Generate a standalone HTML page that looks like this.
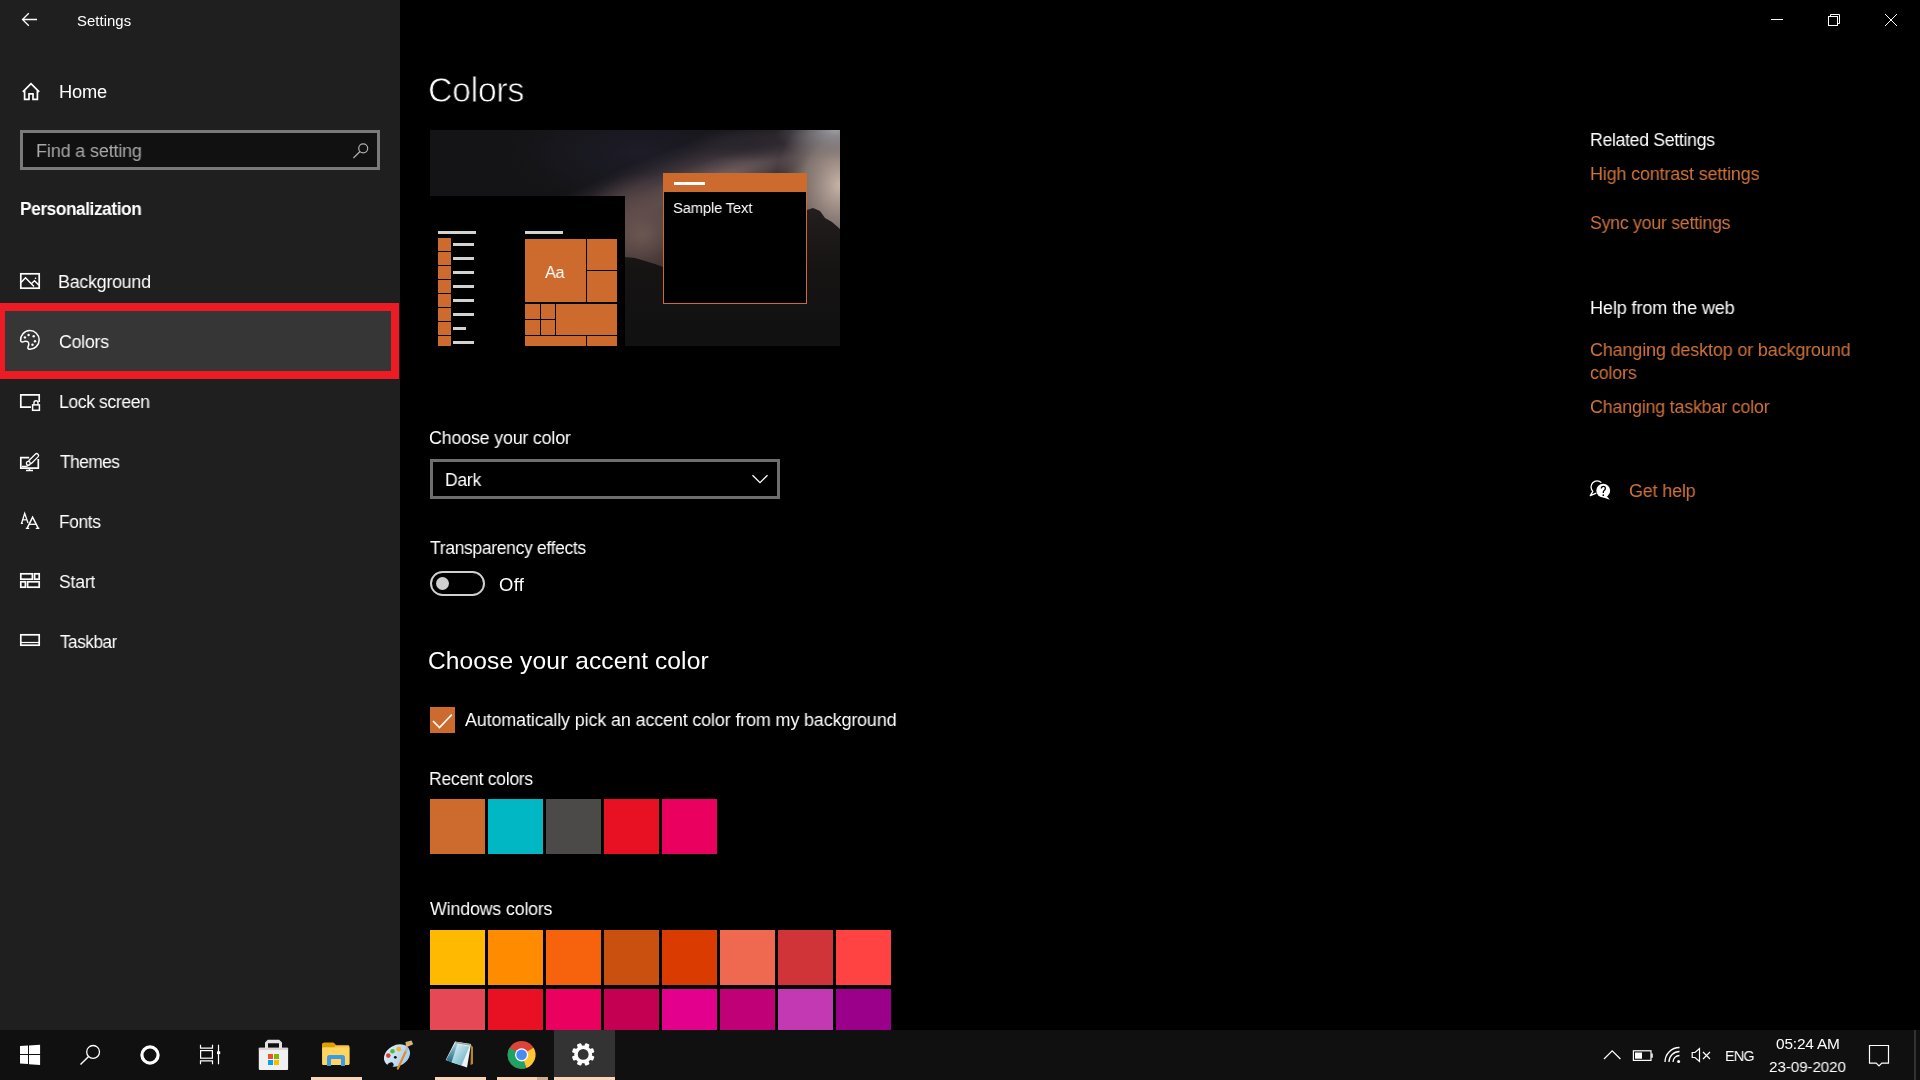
<!DOCTYPE html>
<html><head><meta charset="utf-8"><title>Settings - Colors</title>
<style>
*{margin:0;padding:0;box-sizing:border-box}
html,body{width:1920px;height:1080px;overflow:hidden;background:#000;font-family:"Liberation Sans",sans-serif;color:#fff}
.a{position:absolute}
.t{position:absolute;white-space:nowrap;line-height:1;will-change:transform}
svg{position:absolute;overflow:visible}
</style></head><body>

<div class="a" style="left:0;top:0;width:400px;height:1030px;background:#1f1f1f"></div>
<div class="a" style="left:0;top:303px;width:399px;height:76px;background:#ed1c24"></div>
<div class="a" style="left:5px;top:311px;width:386px;height:60px;background:#363636"></div>
<div class="a" style="left:20px;top:130px;width:360px;height:40px;border:3px solid #7a7a7a;background:#111"></div>
<div class="a" style="left:430px;top:459px;width:350px;height:40px;border:3px solid #6e6e6e;background:#000"></div>
<svg class="a" style="left:0;top:0" width="400" height="700" viewBox="0 0 400 700" fill="none" stroke="#fff" stroke-width="1.3">
<path d="M22.5 19.5H37M28.8 13.2L22.5 19.5L28.8 25.8"/>
<path d="M22.8 91.8L31 83.6L39.2 91.8M24.6 90V99.3H29V93.8H33V99.3H37.4V90" stroke-width="1.7"/>
<circle cx="363.2" cy="148.3" r="4.5" stroke-width="1.2" stroke="#b0b0b0"/><path d="M360 151.5L353.4 158" stroke-width="1.2" stroke="#b0b0b0"/>
<rect x="20.8" y="273.8" width="18.4" height="14.4" stroke-width="1.7"/><path d="M21 282.5L25.5 277.8L34 286.5M31.3 283.8L34.5 280.7L39 285.2" stroke-width="1.5"/><circle cx="35.5" cy="278.3" r="0.8" fill="#fff" stroke="none"/>
<path d="M29.5 349.2A9.3 9.3 0 1 0 20.6 340.6C20.9 342.3 22.6 342.3 24.5 341.4C26.8 340.6 29 342 28.8 344.4C28.6 346.2 27.4 347.2 28 348.4C28.3 349 28.9 349.2 29.5 349.2Z" stroke-width="1.5"/>
<circle cx="24.9" cy="337.4" r="1.2" fill="#fff" stroke="none"/>
<circle cx="28.6" cy="335" r="1.2" fill="#fff" stroke="none"/>
<circle cx="33.7" cy="336.3" r="1.2" fill="#fff" stroke="none"/>
<circle cx="35" cy="341.3" r="1.2" fill="#fff" stroke="none"/>
<circle cx="32.5" cy="344.8" r="1.2" fill="#fff" stroke="none"/>
<path d="M31 407.2H20.8V394.8H39.2V402" stroke-width="1.7"/><rect x="32.6" y="404.9" width="6.8" height="5.4" stroke-width="1.5"/><path d="M34 404.8V402.8A2 2 0 0 1 38 402.8V404.8" stroke-width="1.4"/>
<path d="M29.2 457.6H20.8V468.2H38.3V459" stroke-width="1.7"/><path d="M26 470.6H33M29.5 468.5V470.5" stroke-width="1.5"/>
<rect x="-1.9" y="-6.2" width="3.8" height="12.4" rx="1.9" transform="translate(33.6 458.6) rotate(45)" stroke-width="1.3" fill="#1f1f1f"/>
<circle cx="28.3" cy="463.2" r="1.9" stroke-width="1.3" fill="#1f1f1f"/><path d="M22 466.3H26.2C27.2 466.3 28.2 465.8 28.7 465" stroke-width="1.3"/>
<rect x="20.8" y="573.8" width="11.6" height="5.4" stroke-width="1.7"/><rect x="34.6" y="573.8" width="4.6" height="5.4" stroke-width="1.7"/><rect x="20.8" y="581.8" width="4.6" height="5.4" stroke-width="1.7"/><rect x="27.6" y="581.8" width="11.6" height="5.4" stroke-width="1.7"/>
<rect x="20.8" y="634.8" width="18.4" height="10.4" stroke-width="1.7"/><path d="M21 642.5H39" stroke-width="1.2"/>
</svg>
<svg class="a" style="left:0;top:0" width="60" height="560" fill="none" stroke="#fff" stroke-linejoin="miter"><path d="M21.6 523.3L24.7 513.3L28 523" stroke-width="1.3"/><path d="M22.8 519.8H26.6" stroke-width="1.2"/><path d="M20.8 523.4H23" stroke-width="1.1"/><path d="M27.2 528.2L32.6 517.2L38.2 528.2" stroke-width="1.5"/><path d="M29.2 524.3H36.2" stroke-width="1.3"/><path d="M25.8 528.4H29.2M35.8 528.4H39.4" stroke-width="1.2"/></svg>
<svg class="a" style="left:1760px;top:0" width="160" height="40" fill="none" stroke="#fff" stroke-width="1">
<path d="M11 19.5H23"/>
<rect x="68.5" y="16.5" width="9" height="9"/><path d="M70.5 16.5V14.5H79.5V23.5H77.5"/>
<path d="M125 14L137 26M137 14L125 26"/>
</svg>
<svg class="a" style="left:430px;top:130px;overflow:hidden" width="410" height="216" viewBox="0 0 410 216">
<defs>
<radialGradient id="g1"><stop offset="0" stop-color="#1d1c28" stop-opacity="1"/><stop offset="1" stop-color="#1d1c28" stop-opacity="0"/></radialGradient>
<radialGradient id="g2"><stop offset="0" stop-color="#5a4a4e" stop-opacity="1"/><stop offset="0.5" stop-color="#4a3e44" stop-opacity="0.8"/><stop offset="1" stop-color="#3a3038" stop-opacity="0"/></radialGradient>
<radialGradient id="g3"><stop offset="0" stop-color="#c8b4a8" stop-opacity="1"/><stop offset="0.55" stop-color="#a8968e" stop-opacity="0.7"/><stop offset="1" stop-color="#8a7c7c" stop-opacity="0"/></radialGradient>
<radialGradient id="g4"><stop offset="0" stop-color="#6e5852" stop-opacity="0.95"/><stop offset="0.6" stop-color="#5e4a48" stop-opacity="0.6"/><stop offset="1" stop-color="#4a3c3e" stop-opacity="0"/></radialGradient>
<radialGradient id="g5"><stop offset="0" stop-color="#29252d" stop-opacity="1"/><stop offset="1" stop-color="#29252d" stop-opacity="0"/></radialGradient>
<radialGradient id="g7"><stop offset="0" stop-color="#9c9ca2" stop-opacity="1"/><stop offset="1" stop-color="#6a6a72" stop-opacity="0"/></radialGradient>
<radialGradient id="g6"><stop offset="0" stop-color="#7a6a68" stop-opacity="0.9"/><stop offset="1" stop-color="#6a5a5a" stop-opacity="0"/></radialGradient>
<linearGradient id="m1" x1="0" y1="0" x2="0" y2="1"><stop offset="0" stop-color="#241e1e"/><stop offset="0.45" stop-color="#161313"/><stop offset="1" stop-color="#111"/></linearGradient>
<linearGradient id="m2" x1="0" y1="0" x2="0" y2="1"><stop offset="0" stop-color="#3a302e"/><stop offset="1" stop-color="#141212"/></linearGradient>
</defs>
<rect width="410" height="216" fill="#141416"/>
<ellipse cx="210" cy="22" rx="130" ry="55" fill="url(#g1)"/>
<ellipse cx="235" cy="72" rx="230" ry="48" transform="rotate(-22 235 72)" fill="url(#g2)"/>
<ellipse cx="290" cy="48" rx="95" ry="20" transform="rotate(-18 290 48)" fill="url(#g6)"/>
<ellipse cx="318" cy="14" rx="60" ry="18" fill="url(#g5)"/>
<ellipse cx="410" cy="55" rx="65" ry="80" fill="url(#g3)"/>
<ellipse cx="405" cy="0" rx="60" ry="30" fill="url(#g7)"/>
<ellipse cx="212" cy="105" rx="65" ry="62" fill="url(#g4)"/>
<path d="M195 127L205 128L215 131L225 134L233 137L250 145L300 160L340 140L377 80L383 78L390 81L395 88L402 92L410 99V216H195Z" fill="url(#m1)"/>
</svg>
<div class="a" style="left:430px;top:196px;width:195px;height:150px;background:#000"></div>
<div class="a" style="left:438px;top:231px;width:38px;height:3px;background:#d2d2d2"></div>
<div class="a" style="left:438px;top:238px;width:13px;height:13px;background:#cd6a2e"></div>
<div class="a" style="left:453px;top:243px;width:21px;height:3px;background:#d2d2d2"></div>
<div class="a" style="left:438px;top:252px;width:13px;height:13px;background:#cd6a2e"></div>
<div class="a" style="left:453px;top:257px;width:21px;height:3px;background:#d2d2d2"></div>
<div class="a" style="left:438px;top:266px;width:13px;height:13px;background:#cd6a2e"></div>
<div class="a" style="left:453px;top:271px;width:21px;height:3px;background:#d2d2d2"></div>
<div class="a" style="left:438px;top:280px;width:13px;height:13px;background:#cd6a2e"></div>
<div class="a" style="left:453px;top:285px;width:21px;height:3px;background:#d2d2d2"></div>
<div class="a" style="left:438px;top:294px;width:13px;height:13px;background:#cd6a2e"></div>
<div class="a" style="left:453px;top:299px;width:21px;height:3px;background:#d2d2d2"></div>
<div class="a" style="left:438px;top:308px;width:13px;height:13px;background:#cd6a2e"></div>
<div class="a" style="left:453px;top:313px;width:21px;height:3px;background:#d2d2d2"></div>
<div class="a" style="left:438px;top:322px;width:13px;height:13px;background:#cd6a2e"></div>
<div class="a" style="left:453px;top:327px;width:13px;height:3px;background:#d2d2d2"></div>
<div class="a" style="left:438px;top:336px;width:13px;height:10px;background:#cd6a2e"></div>
<div class="a" style="left:453px;top:341px;width:21px;height:3px;background:#d2d2d2"></div>
<div class="a" style="left:525px;top:231px;width:38px;height:3px;background:#d2d2d2"></div>
<div class="a" style="left:525px;top:239px;width:61px;height:63px;background:#cd6a2e"></div>
<div class="a" style="left:587px;top:239px;width:30px;height:31px;background:#cd6a2e"></div>
<div class="a" style="left:587px;top:271px;width:30px;height:31px;background:#cd6a2e"></div>
<div class="a" style="left:525px;top:304px;width:15px;height:15px;background:#cd6a2e"></div>
<div class="a" style="left:541px;top:304px;width:14px;height:15px;background:#cd6a2e"></div>
<div class="a" style="left:525px;top:320px;width:15px;height:15px;background:#cd6a2e"></div>
<div class="a" style="left:541px;top:320px;width:14px;height:15px;background:#cd6a2e"></div>
<div class="a" style="left:556px;top:304px;width:61px;height:31px;background:#cd6a2e"></div>
<div class="a" style="left:525px;top:336px;width:61px;height:10px;background:#cd6a2e"></div>
<div class="a" style="left:587px;top:336px;width:30px;height:10px;background:#cd6a2e"></div>
<div class="a" style="left:663px;top:173px;width:144px;height:131px;border:1px solid #cd6a2e;border-top:19px solid #cd6a2e;background:#000"></div>
<div class="a" style="left:674px;top:182px;width:31px;height:3px;background:#fff"></div>
<div class="a" style="left:430px;top:571px;width:55px;height:25px;border:2px solid #cfcfcf;border-radius:13px"></div>
<div class="a" style="left:436px;top:577px;width:13px;height:13px;border-radius:50%;background:#cfcfcf"></div>
<svg class="a" style="left:750px;top:470px" width="22" height="18" fill="none" stroke="#fff" stroke-width="1.3"><path d="M2.5 5.2L10 12.6L17.5 5.2"/></svg>
<div class="a" style="left:430px;top:707px;width:25px;height:26px;background:#cd6a2e"></div>
<svg class="a" style="left:430px;top:707px" width="25" height="25" fill="none" stroke="#fff" stroke-width="1.6"><path d="M3 14L9.5 20.5L21.8 7.6"/></svg>
<div class="a" style="left:430px;top:799px;width:55px;height:55px;background:#cd6a2e"></div>
<div class="a" style="left:488px;top:799px;width:55px;height:55px;background:#00b7c3"></div>
<div class="a" style="left:546px;top:799px;width:55px;height:55px;background:#4c4a48"></div>
<div class="a" style="left:604px;top:799px;width:55px;height:55px;background:#e81123"></div>
<div class="a" style="left:662px;top:799px;width:55px;height:55px;background:#ea005e"></div>
<div class="a" style="left:430px;top:930px;width:55px;height:55px;background:#ffb900"></div>
<div class="a" style="left:488px;top:930px;width:55px;height:55px;background:#ff8c00"></div>
<div class="a" style="left:546px;top:930px;width:55px;height:55px;background:#f7630c"></div>
<div class="a" style="left:604px;top:930px;width:55px;height:55px;background:#ca5010"></div>
<div class="a" style="left:662px;top:930px;width:55px;height:55px;background:#da3b01"></div>
<div class="a" style="left:720px;top:930px;width:55px;height:55px;background:#ef6950"></div>
<div class="a" style="left:778px;top:930px;width:55px;height:55px;background:#d13438"></div>
<div class="a" style="left:836px;top:930px;width:55px;height:55px;background:#ff4343"></div>
<div class="a" style="left:430px;top:989px;width:55px;height:55px;background:#e74856"></div>
<div class="a" style="left:488px;top:989px;width:55px;height:55px;background:#e81123"></div>
<div class="a" style="left:546px;top:989px;width:55px;height:55px;background:#ea005e"></div>
<div class="a" style="left:604px;top:989px;width:55px;height:55px;background:#c30052"></div>
<div class="a" style="left:662px;top:989px;width:55px;height:55px;background:#e3008c"></div>
<div class="a" style="left:720px;top:989px;width:55px;height:55px;background:#bf0077"></div>
<div class="a" style="left:778px;top:989px;width:55px;height:55px;background:#c239b3"></div>
<div class="a" style="left:836px;top:989px;width:55px;height:55px;background:#9a0089"></div>
<svg class="a" style="left:1588px;top:478px" width="24" height="24" fill="none" stroke="#fff" stroke-width="1.3" stroke-linejoin="round"><path d="M4.9 13.4A6.1 6.1 0 1 1 13.4 4.6"/><path d="M5 13.2L2.3 17.7L8.3 15.2"/><circle cx="15.2" cy="12.7" r="6.9" fill="#fff" stroke="none"/><path d="M18.3 17.5L21.8 21.7L14.8 19.3Z" fill="#fff" stroke="none"/><path d="M13.3 10.6Q13.3 8.4 15.4 8.4Q17.4 8.4 17.4 10.3Q17.4 11.5 16.2 12.4Q15.3 13.1 15.3 14.4V15" stroke="#000" stroke-width="1.3" stroke-linejoin="miter"/><circle cx="15.3" cy="17.2" r="0.85" fill="#000" stroke="none"/></svg>
<div class="a" style="left:0;top:1030px;width:1920px;height:50px;background:#101010"></div>
<div class="a" style="left:554px;top:1030px;width:61px;height:50px;background:#333"></div>
<div class="a" style="left:311px;top:1077px;width:51px;height:3px;background:#fcd3b5"></div>
<div class="a" style="left:435px;top:1077px;width:51px;height:3px;background:#fcd3b5"></div>
<div class="a" style="left:497px;top:1077px;width:40px;height:3px;background:#fcd3b5"></div>
<div class="a" style="left:537px;top:1077px;width:11px;height:3px;background:#d2ab93"></div>
<div class="a" style="left:554px;top:1077px;width:61px;height:3px;background:#fcd3b5"></div>
<svg class="a" style="left:0;top:1030px" width="1920" height="50" fill="none" stroke="#fff">
<path d="M20 16.1L28 15.55V24H20Z M29 15.45L40.1 14.7V24H29Z M20 25H28V34.1L20 33.6Z M29 25H40.1V35.1L29 34.3Z" fill="#fff" stroke="none"/>
</svg>
<svg class="a" style="left:0;top:1030px" width="700" height="50" viewBox="0 0 700 50">
<g fill="none" stroke="#fff">
<circle cx="93.1" cy="21.9" r="6.4" stroke-width="1.3"/><path d="M88.6 26.4L80.5 34.5" stroke-width="1.4"/>
<circle cx="150" cy="25" r="8.1" stroke-width="3.2"/>
<path d="M200.5 14.7V18.2H212.5V14.7M200.5 34.3V30.8H212.5V34.3" stroke-width="1.2"/>
<rect x="200.6" y="20.6" width="11.8" height="7.6" stroke-width="1.2"/>
<path d="M218.5 14.7V34.3" stroke-width="1.2"/>
</g>
<rect x="217" y="21.3" width="3.2" height="2.8" fill="#fff"/>
<!-- store -->
<path d="M265 18V12.5L267.8 9.7H279.2L282 12.5V18H279V13.2H268V18Z" fill="#e2e2e2"/>
<rect x="258.8" y="17.8" width="29.3" height="22.2" rx="1" fill="#f0f0f0"/>
<rect x="258.8" y="17.8" width="29.3" height="2.2" fill="#d6d6d6"/>
<rect x="268" y="24" width="5" height="5" fill="#f25022"/><rect x="274" y="24" width="5" height="5" fill="#7fba00"/>
<rect x="268" y="30" width="5" height="5" fill="#00a4ef"/><rect x="274" y="30" width="5" height="5" fill="#ffb900"/>
<!-- explorer -->
<path d="M322.2 14.5Q322.2 12.8 324 12.8H333.5L336 15.2H348Q349.4 15.2 349.4 16.6V33.5Q349.4 35 348 35H323.6Q322.2 35 322.2 33.5Z" fill="#f8c73e"/>
<path d="M322.2 14.5Q322.2 12.8 324 12.8H333.5L336 15.2L334 17.5H322.2Z" fill="#e0a000"/>
<path d="M322.2 17.5H349.4V33.5Q349.4 35 348 35H323.6Q322.2 35 322.2 33.5Z" fill="#ffd55f"/>
<path d="M327 36V27.5Q327 25 329.5 25H342.5Q345 25 345 27.5V36H341V29H331V36Z" fill="#3c9be6"/>
<!-- paint -->
<defs><linearGradient id="pal" x1="0" y1="0" x2="1" y2="1"><stop offset="0" stop-color="#e4f2fb"/><stop offset="1" stop-color="#9cc8e8"/></linearGradient>
<linearGradient id="np" x1="0" y1="0" x2="1" y2="1"><stop offset="0" stop-color="#e8f6fa"/><stop offset="1" stop-color="#58a8c0"/></linearGradient>
<linearGradient id="nt" x1="0" y1="0" x2="0" y2="1"><stop offset="0" stop-color="#a8d0dc"/><stop offset="1" stop-color="#1a6a80"/></linearGradient></defs>
<ellipse cx="397" cy="25.6" rx="13.7" ry="10.4" transform="rotate(-28 397 25.6)" fill="url(#pal)"/>
<ellipse cx="390.5" cy="35.2" rx="3.2" ry="2.6" transform="rotate(-30 390.5 35.2)" fill="#101010"/>
<circle cx="395.3" cy="27.3" r="1.4" fill="#101010"/>
<circle cx="388.3" cy="25.6" r="2.3" fill="#e03a30"/><circle cx="392.5" cy="21.3" r="2.3" fill="#4cbc3c"/><circle cx="398.8" cy="19.2" r="2.4" fill="#f5b321"/>
<path d="M397.8 38.6L406.2 20.5" stroke="#e58a2c" stroke-width="2.2" stroke-linecap="round"/>
<path d="M405.6 21.5L407.8 17.5" stroke="#b8b8b8" stroke-width="2.2"/>
<path d="M406 17.5L405.5 12L411.5 10.5L413.2 14.2Z" fill="#d9b27c"/>
<!-- notepad -->
<path d="M455 11.5L471 14L467 37.5L445.7 30Z" fill="#eef4f6"/>
<path d="M456 14L469.5 16.5L461.5 35.5L451.5 32.5Z" fill="url(#np)"/>
<path d="M446.2 29.8L455.3 13L457.5 13.6L451.5 32.5Z" fill="url(#nt)"/>
<path d="M471 15L473 17L473 34L470.5 35Z" fill="#b8862a"/>
<path d="M455.5 12.5L470.5 15" stroke="#9aa4a8" stroke-width="1.3"/>
<!-- chrome -->
<circle cx="521.6" cy="24.8" r="13.9" fill="#db4437"/>
<path d="M521.6 24.8L533.6 17.85A13.9 13.9 0 0 1 526.3 37.9Z" fill="#fcc934"/>
<path d="M521.6 24.8L526.3 37.9A13.9 13.9 0 0 1 509.5 17.8Z" fill="#1ea362"/>
<circle cx="521.6" cy="24.8" r="6.6" fill="#fff"/>
<circle cx="521.6" cy="24.8" r="5.3" fill="#4a8af4"/>
</g>
</svg>
<svg class="a" style="left:0;top:0" width="1920" height="1080"><g fill="#fff"><circle cx="583.20" cy="1054.40" r="8.9"/><rect x="580.90" y="1043.00" width="4.6" height="6" rx="1" transform="rotate(22.5 583.20 1054.40)"/><rect x="580.90" y="1043.00" width="4.6" height="6" rx="1" transform="rotate(67.5 583.20 1054.40)"/><rect x="580.90" y="1043.00" width="4.6" height="6" rx="1" transform="rotate(112.5 583.20 1054.40)"/><rect x="580.90" y="1043.00" width="4.6" height="6" rx="1" transform="rotate(157.5 583.20 1054.40)"/><rect x="580.90" y="1043.00" width="4.6" height="6" rx="1" transform="rotate(202.5 583.20 1054.40)"/><rect x="580.90" y="1043.00" width="4.6" height="6" rx="1" transform="rotate(247.5 583.20 1054.40)"/><rect x="580.90" y="1043.00" width="4.6" height="6" rx="1" transform="rotate(292.5 583.20 1054.40)"/><rect x="580.90" y="1043.00" width="4.6" height="6" rx="1" transform="rotate(337.5 583.20 1054.40)"/></g><circle cx="583.20" cy="1054.40" r="5.4" fill="#333"/></svg>
<svg class="a" style="left:1580px;top:1030px" width="340" height="50" viewBox="0 0 340 50">
<g fill="none" stroke="#fff" stroke-width="1.2">
<path d="M24 29L32.2 20.8L40.4 29"/>
<rect x="53.4" y="20.8" width="17.6" height="9.6"/><path d="M72 23.5V27.8" stroke-width="1.5"/>
<path d="M85 32A14.5 14.5 0 0 1 99.5 17.5M89 32A10.5 10.5 0 0 1 99.5 21.5M93 32A6.5 6.5 0 0 1 99.5 25.5" stroke-width="1.3"/>
<path d="M112.2 22.5H115L119.5 18.5V31.5L115 27.5H112.2Z"/>
<path d="M123 22L130 29M130 22L123 29"/>
<path d="M289.5 15.5H308.5V33.2H301.8L299 36L296.2 33.2H289.5Z"/>
</g>
<rect x="55" y="22.5" width="7" height="6.2" fill="#fff"/>
<circle cx="98.6" cy="31.4" r="1.5" fill="#fff"/>
<rect x="334.5" y="0" width="1" height="50" fill="#555"/>
</svg>
<div class="t" style="left:77.29px;top:13.56px;font-size:14.70px;letter-spacing:0.050px;font-weight:normal;color:#fff;transform:scaleX(1.0135);transform-origin:0 0;">Settings</div>
<div class="t" style="left:59.31px;top:82.81px;font-size:18.30px;letter-spacing:-0.217px;font-weight:normal;color:#fff;transform:scaleX(0.9935);transform-origin:0 0;">Home</div>
<div class="t" style="left:35.51px;top:141.51px;font-size:18.30px;letter-spacing:-0.173px;font-weight:normal;color:#a8a8a8;transform:scaleX(0.9857);transform-origin:0 0;">Find a setting</div>
<div class="t" style="left:19.55px;top:199.51px;font-size:18.30px;letter-spacing:-0.482px;font-weight:bold;color:#fff;transform:scaleX(0.9484);transform-origin:0 0;">Personalization</div>
<div class="t" style="left:58.02px;top:272.51px;font-size:18.30px;letter-spacing:-0.278px;font-weight:normal;color:#fff;transform:scaleX(0.9785);transform-origin:0 0;">Background</div>
<div class="t" style="left:58.78px;top:332.51px;font-size:18.30px;letter-spacing:-0.250px;font-weight:normal;color:#fff;transform:scaleX(0.9700);transform-origin:0 0;">Colors</div>
<div class="t" style="left:58.54px;top:392.51px;font-size:18.30px;letter-spacing:-0.420px;font-weight:normal;color:#fff;transform:scaleX(0.9630);transform-origin:0 0;">Lock screen</div>
<div class="t" style="left:60.00px;top:452.51px;font-size:18.30px;letter-spacing:-0.670px;font-weight:normal;color:#fff;transform:scaleX(0.9565);transform-origin:0 0;">Themes</div>
<div class="t" style="left:58.55px;top:512.51px;font-size:18.30px;letter-spacing:-0.400px;font-weight:normal;color:#fff;transform:scaleX(0.9488);transform-origin:0 0;">Fonts</div>
<div class="t" style="left:58.54px;top:572.51px;font-size:18.30px;letter-spacing:-0.188px;font-weight:normal;color:#fff;transform:scaleX(0.9595);transform-origin:0 0;">Start</div>
<div class="t" style="left:60.00px;top:632.51px;font-size:18.30px;letter-spacing:-0.542px;font-weight:normal;color:#fff;transform:scaleX(0.9426);transform-origin:0 0;">Taskbar</div>
<div class="t" style="left:427.63px;top:72.80px;font-size:34.50px;letter-spacing:-0.360px;font-weight:normal;color:#fff;transform:scaleX(0.9832);transform-origin:0 0;-webkit-text-stroke:0.8px #000;">Colors</div>
<div class="t" style="left:673.43px;top:200.13px;font-size:15.20px;letter-spacing:-0.165px;font-weight:normal;color:#fff;transform:scaleX(0.9716);transform-origin:0 0;">Sample Text</div>
<div class="t" style="left:544.90px;top:264.24px;font-size:17.20px;letter-spacing:-0.500px;font-weight:normal;color:#fff;transform:scaleX(0.9524);transform-origin:0 0;">Aa</div>
<div class="t" style="left:429.32px;top:429.31px;font-size:18.30px;letter-spacing:-0.197px;font-weight:normal;color:#fff;transform:scaleX(0.9771);transform-origin:0 0;">Choose your color</div>
<div class="t" style="left:444.94px;top:470.51px;font-size:18.30px;letter-spacing:-0.267px;font-weight:normal;color:#fff;transform:scaleX(0.9568);transform-origin:0 0;">Dark</div>
<div class="t" style="left:430.00px;top:538.51px;font-size:18.30px;letter-spacing:-0.342px;font-weight:normal;color:#fff;transform:scaleX(0.9571);transform-origin:0 0;">Transparency effects</div>
<div class="t" style="left:499.39px;top:575.51px;font-size:18.30px;letter-spacing:0.300px;font-weight:normal;color:#fff;transform:scaleX(1.0083);transform-origin:0 0;">Off</div>
<div class="t" style="left:428.49px;top:648.95px;font-size:24.40px;letter-spacing:0.087px;font-weight:normal;color:#fff;transform:scaleX(1.0072);transform-origin:0 0;">Choose your accent color</div>
<div class="t" style="left:465.20px;top:710.91px;font-size:18.30px;letter-spacing:-0.144px;font-weight:normal;color:#fff;transform:scaleX(0.9818);transform-origin:0 0;">Automatically pick an accent color from my background</div>
<div class="t" style="left:429.04px;top:770.01px;font-size:18.30px;letter-spacing:-0.292px;font-weight:normal;color:#fff;transform:scaleX(0.9626);transform-origin:0 0;">Recent colors</div>
<div class="t" style="left:430.00px;top:900.21px;font-size:18.30px;letter-spacing:-0.192px;font-weight:normal;color:#fff;transform:scaleX(0.9760);transform-origin:0 0;">Windows colors</div>
<div class="t" style="left:1589.63px;top:130.51px;font-size:18.30px;letter-spacing:-0.313px;font-weight:normal;color:#fff;transform:scaleX(0.9656);transform-origin:0 0;">Related Settings</div>
<div class="t" style="left:1589.62px;top:164.51px;font-size:18.30px;letter-spacing:-0.131px;font-weight:normal;color:#d0733a;transform:scaleX(0.9797);transform-origin:0 0;">High contrast settings</div>
<div class="t" style="left:1589.63px;top:213.51px;font-size:18.30px;letter-spacing:-0.271px;font-weight:normal;color:#d0733a;transform:scaleX(0.9706);transform-origin:0 0;">Sync your settings</div>
<div class="t" style="left:1589.51px;top:298.71px;font-size:18.30px;letter-spacing:-0.116px;font-weight:normal;color:#fff;transform:scaleX(0.9883);transform-origin:0 0;">Help from the web</div>
<div class="t" style="left:1589.52px;top:340.51px;font-size:18.30px;letter-spacing:-0.147px;font-weight:normal;color:#d0733a;transform:scaleX(0.9829);transform-origin:0 0;">Changing desktop or background</div>
<div class="t" style="left:1589.53px;top:364.11px;font-size:18.30px;letter-spacing:-0.140px;font-weight:normal;color:#d0733a;transform:scaleX(0.9702);transform-origin:0 0;">colors</div>
<div class="t" style="left:1589.52px;top:397.91px;font-size:18.30px;letter-spacing:-0.195px;font-weight:normal;color:#d0733a;transform:scaleX(0.9770);transform-origin:0 0;">Changing taskbar color</div>
<div class="t" style="left:1629.02px;top:482.41px;font-size:18.30px;letter-spacing:-0.164px;font-weight:normal;color:#d0733a;transform:scaleX(0.9803);transform-origin:0 0;">Get help</div>
<div class="t" style="left:1724.67px;top:1047.96px;font-size:15.40px;letter-spacing:-0.775px;font-weight:normal;color:#fff;transform:scaleX(0.9300);transform-origin:0 0;">ENG</div>
<div class="t" style="left:1775.91px;top:1036.26px;font-size:15.40px;letter-spacing:-0.171px;font-weight:normal;color:#fff;transform:scaleX(0.9935);transform-origin:0 0;">05:24 AM</div>
<div class="t" style="left:1769.41px;top:1058.86px;font-size:15.40px;letter-spacing:-0.100px;font-weight:normal;color:#fff;transform:scaleX(0.9895);transform-origin:0 0;">23-09-2020</div>
</body></html>
